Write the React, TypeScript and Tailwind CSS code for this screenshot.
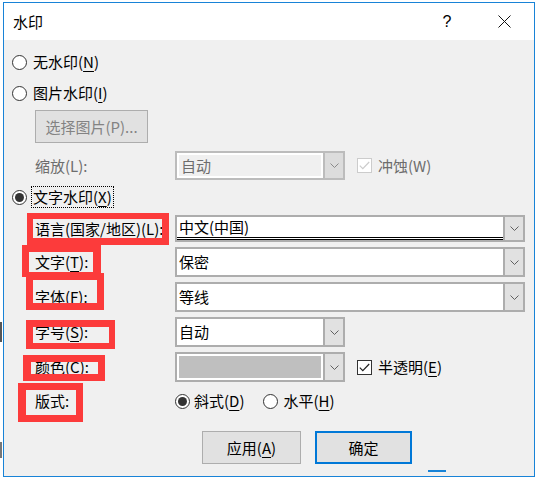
import type { ReactNode } from 'react';

const FONT = "font-['Noto_Sans_CJK_SC','Noto_Sans',sans-serif]";

function Chevron({ color = '#606060' }: { color?: string }) {
  return (
    <svg width="9" height="5" viewBox="0 0 9 5" fill="none">
      <path d="M0.5 0.5 L4.5 4.5 L8.5 0.5" stroke={color} strokeWidth="1" />
    </svg>
  );
}

function Radio({ checked = false }: { checked?: boolean }) {
  return (
    <span className="flex h-[15px] w-[15px] shrink-0 items-center justify-center rounded-full border border-[#333333] bg-white">
      {checked && <span className="h-[9px] w-[9px] rounded-full bg-[#333333]" />}
    </span>
  );
}

function Checkbox({ disabled = false }: { disabled?: boolean }) {
  const stroke = disabled ? '#cccccc' : '#222222';
  return (
    <span
      className={`flex h-[15px] w-[15px] shrink-0 items-center justify-center border bg-white ${
        disabled ? 'border-[#cccccc]' : 'border-[#333333]'
      }`}
    >
      <svg width="11" height="9" viewBox="0 0 11 9" fill="none">
        <path d="M0.8 4.6 L3.8 7.6 L10.2 1" stroke={stroke} strokeWidth="1.2" />
      </svg>
    </span>
  );
}

function Combo({
  w,
  h,
  disabled = false,
  children,
}: {
  w: string;
  h: string;
  disabled?: boolean;
  children: ReactNode;
}) {
  return (
    <div
      className={`flex ${w} ${h} border-2 bg-white ${disabled ? 'border-[#bcbcbc]' : 'border-[#adadad]'}`}
    >
      <div className={`flex min-w-0 flex-1 ${disabled ? 'border-2 border-white bg-[#f0f0f0]' : ''}`}>
        {children}
      </div>
      <div
        className={`flex w-[20px] items-center justify-center border-l-2 ${
          disabled ? 'border-[#bcbcbc] bg-[#dcdcdc]' : 'border-[#adadad] bg-[#e1e1e1]'
        }`}
      >
        <Chevron color={disabled ? '#8a8a8a' : '#606060'} />
      </div>
    </div>
  );
}

const ComboText = ({ children, gray = false }: { children: ReactNode; gray?: boolean }) => (
  <span className={`flex items-center pl-[2px] leading-[20px] ${gray ? 'text-[#6d6d6d]' : ''}`}>
    {children}
  </span>
);

const U = ({ children }: { children: ReactNode }) => (
  <span className="underline decoration-1 underline-offset-[3px]">{children}</span>
);

export default function App() {
  const label = 'ml-[23px] w-[140px] shrink-0 leading-[20px]';

  return (
    <div className={`relative h-[480px] w-[536px] overflow-hidden bg-white text-[15px] text-black ${FONT}`}>
      <div className="ml-[3px] mt-[2px] flex h-[475px] w-[532px] flex-col border border-[#1883d7] bg-[#f0f0f0]">
        {/* title bar */}
        <div className="flex h-[37px] items-center bg-white">
          <span className="pl-[9px] leading-[20px]">水印</span>
          <span className="ml-auto w-[30px] text-center text-[16px] leading-[20px] font-['Liberation_Sans',sans-serif]">
            ?
          </span>
          <span className="ml-[27px] mr-[15px] flex w-[30px] justify-center">
            <svg width="13" height="13" viewBox="0 0 13 13" fill="none">
              <path d="M0.5 0.5 L12.5 12.5 M12.5 0.5 L0.5 12.5" stroke="#111" strokeWidth="1" />
            </svg>
          </span>
        </div>

        {/* body */}
        <div className="flex flex-1 flex-col px-[8px]">
          <div className="mt-[12px] flex h-[20px] items-center">
            <Radio />
            <span className="ml-[6px] leading-[20px]">
              无水印(<U>N</U>)
            </span>
          </div>

          <div className="mt-[11px] flex h-[20px] items-center">
            <Radio />
            <span className="ml-[6px] leading-[20px]">
              图片水印(<U>I</U>)
            </span>
          </div>

          <button className="ml-[23px] mt-[7px] flex h-[33px] w-[113px] items-center justify-center border border-[#adadad] bg-[#e1e1e1] leading-[20px] text-[#838383]">
            选择图片(P)...
          </button>

          <div className="mt-[8px] flex h-[29px] items-center">
            <span className={`${label} text-[#6d6d6d]`}>缩放(L):</span>
            <Combo w="w-[170px]" h="h-[29px]" disabled>
              <ComboText gray>自动</ComboText>
            </Combo>
            <span className="ml-[12px] flex items-center gap-[6px] text-[#6d6d6d]">
              <Checkbox disabled />
              <span className="leading-[20px]">冲蚀(W)</span>
            </span>
          </div>

          <div className="mt-[6px] flex h-[22px] items-center">
            <Radio checked />
            <span className="ml-[4px] flex h-[22px] items-center border border-dotted border-black px-[1px] leading-[20px]">
              文字水印(<U>X</U>)
            </span>
          </div>

          <div className="mt-[7px] flex h-[27px] items-center">
            <span className={label}>
              语言(国家/地区)(<U>L</U>):
            </span>
            <Combo w="w-[350px]" h="h-[27px]">
              <div className="flex flex-1 flex-col">
                <ComboText>中文(中国)</ComboText>
                <div className="h-[3px] border-y border-black" />
              </div>
            </Combo>
          </div>

          <div className="mt-[5px] flex h-[30px] items-center">
            <span className={label}>
              文字(<U>T</U>):
            </span>
            <Combo w="w-[350px]" h="h-[30px]">
              <ComboText>保密</ComboText>
            </Combo>
          </div>

          <div className="mt-[5px] flex h-[30px] items-center">
            <span className={label}>
              字体(<U>F</U>):
            </span>
            <Combo w="w-[350px]" h="h-[30px]">
              <ComboText>等线</ComboText>
            </Combo>
          </div>

          <div className="mt-[5px] flex h-[30px] items-center">
            <span className={label}>
              字号(<U>S</U>):
            </span>
            <Combo w="w-[170px]" h="h-[30px]">
              <ComboText>自动</ComboText>
            </Combo>
          </div>

          <div className="mt-[5px] flex h-[30px] items-center">
            <span className={label}>
              颜色(<U>C</U>):
            </span>
            <Combo w="w-[170px]" h="h-[30px]">
              <div className="flex flex-1 p-[2px]">
                <div className="flex-1 bg-[#bfbfbf]" />
              </div>
            </Combo>
            <span className="ml-[12px] flex items-center gap-[6px]">
              <Checkbox />
              <span className="leading-[20px]">
                半透明(<U>E</U>)
              </span>
            </span>
          </div>

          <div className="mt-[9px] flex h-[20px] items-center">
            <span className={label}>版式:</span>
            <span className="flex items-center gap-[4px]">
              <Radio checked />
              <span className="leading-[20px]">
                斜式(<U>D</U>)
              </span>
            </span>
            <span className="ml-[19px] flex items-center gap-[5px]">
              <Radio />
              <span className="leading-[20px]">
                水平(<U>H</U>)
              </span>
            </span>
          </div>

          <div className="mt-[20px] flex gap-[14px] pl-[190px]">
            <button className="flex h-[33px] w-[99px] items-center justify-center border border-[#adadad] bg-[#e1e1e1] leading-[20px]">
              应用(<U>A</U>)
            </button>
            <button className="flex h-[33px] w-[97px] items-center justify-center border-2 border-[#0078d7] bg-[#e1e1e1] leading-[20px]">
              确定
            </button>
          </div>
        </div>
      </div>

      {/* red annotation frames drawn over the screenshot */}
      <div className="absolute left-[27px] top-[213px] h-[32px] w-[142px] border-[6px] border-b-[7px] border-r-[7px] border-[#fc3b3b]" />
      <div className="absolute left-[22px] top-[245px] h-[32px] w-[79px] border-[7px] border-b-[5px] border-r-[8px] border-[#fc3b3b]" />
      <div className="absolute left-[26px] top-[273px] h-[37px] w-[78px] border-[7px] border-[#fc3b3b]" />
      <div className="absolute left-[26px] top-[320px] h-[29px] w-[89px] border-[7px] border-b-[6px] border-r-[6px] border-[#fc3b3b]" />
      <div className="absolute left-[23px] top-[355px] h-[26px] w-[82px] border-[7px] border-l-[8px] border-[#fc3b3b]" />
      <div className="absolute left-[18px] top-[383px] h-[39px] w-[65px] border-[7px] border-l-[8px] border-[#fc3b3b]" />

      {/* bits of the window behind */}
      <div className="absolute left-[428px] top-[470px] h-[2px] w-[18px] bg-[#1883d7]" />
      <div className="absolute left-0 top-[322px] h-[20px] w-[2px] bg-[#555555]" />
      <div className="absolute left-0 top-[442px] h-[16px] w-[2px] bg-[#777777]" />
    </div>
  );
}
